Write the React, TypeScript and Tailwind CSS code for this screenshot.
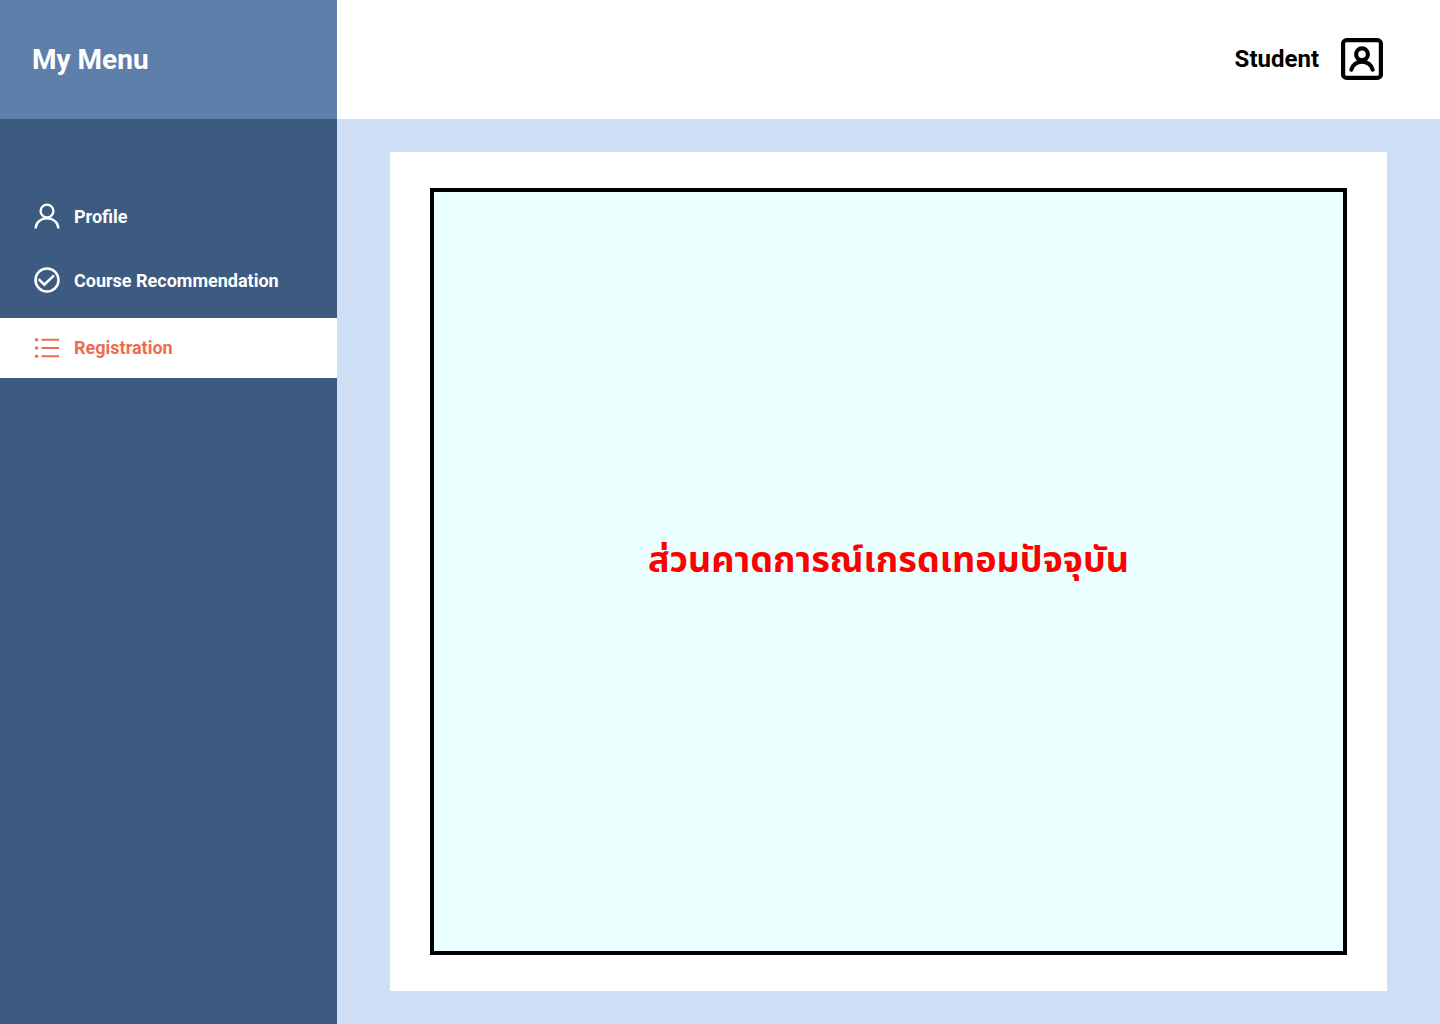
import React from "react";

type IconProps = { className?: string };

function PersonIcon({ className }: IconProps) {
  return (
    <svg viewBox="0 0 28 28" className={className} fill="none" stroke="currentColor" strokeWidth="2.4" strokeLinecap="round" strokeLinejoin="round" aria-hidden="true">
      <circle cx="14" cy="8" r="6.4" />
      <path d="M2.700 24.600A11.350 10.300 0 0 1 25.300 24.600" />
    </svg>
  );
}

function CheckCircleIcon({ className }: IconProps) {
  return (
    <svg viewBox="0 0 28 28" className={className} fill="none" stroke="currentColor" strokeWidth="2.500" aria-hidden="true">
      <circle cx="14" cy="13" r="11.500" />
      <path d="M5.600 12.200L11.300 17.700L21 8.300" />
    </svg>
  );
}

function ListIcon({ className }: IconProps) {
  return (
    <svg viewBox="0 0 28 28" className={className} fill="none" stroke="currentColor" strokeWidth="2" aria-hidden="true">
      <path d="M8.500 5.700H26M8.500 14H26M8.500 22.300H26" />
      <g fill="currentColor" stroke="none">
        <circle cx="3.600" cy="5.700" r="1.700" />
        <circle cx="3.600" cy="14" r="1.700" />
        <circle cx="3.600" cy="22.300" r="1.700" />
      </g>
    </svg>
  );
}

function PortraitIcon({ className }: IconProps) {
  return (
    <svg viewBox="0 0 42 42" className={className} fill="none" stroke="currentColor" strokeWidth="4.200" strokeLinecap="round" aria-hidden="true">
      <rect x="2.100" y="2.100" width="37.800" height="37.800" rx="3.500" />
      <circle cx="21" cy="16.300" r="5.900" />
      <path d="M10.400 31.600A10.800 9.800 0 0 1 31.600 31.600" />
    </svg>
  );
}

const items = [
  { label: "Profile", Icon: PersonIcon, active: false },
  { label: "Course Recommendation", Icon: CheckCircleIcon, active: false },
  { label: "Registration", Icon: ListIcon, active: true },
];

export default function App() {
  return (
    <div className="flex min-h-screen bg-[#cedef4] font-[Roboto,sans-serif]">
      <aside className="flex w-[337px] shrink-0 flex-col bg-[#3d5a80] text-white">
        <div className="flex h-[119px] items-center bg-[#5f7fab] px-8">
          <h2 className="text-[28px] leading-8 font-bold">My Menu</h2>
        </div>
        <nav aria-label="My Menu" className="pt-[66px]">
          <ul>
            {items.map(({ label, Icon, active }) => (
              <li key={label} className={active ? "mt-[5px]" : ""}>
                <a
                  href="#"
                  aria-current={active ? "page" : undefined}
                  className={
                    active
                      ? "flex h-[60px] items-center gap-[13px] bg-white px-[33px] text-[#ee6c4d]"
                      : "flex h-16 items-center gap-[13px] px-[33px]"
                  }
                >
                  <Icon className="size-7 shrink-0" />
                  <span className="text-lg leading-6 font-bold">{label}</span>
                </a>
              </li>
            ))}
          </ul>
        </nav>
      </aside>
      <div className="flex min-w-0 flex-1 flex-col">
        <header className="flex h-[119px] items-center justify-end gap-[22px] bg-white pr-[57px] pb-px">
          <span className="text-2xl font-bold text-black">Student</span>
          <button type="button" aria-label="Student account">
            <PortraitIcon className="size-[42px]" />
          </button>
        </header>
        <main className="flex flex-1 px-[53px] py-[33px]">
          <section className="flex flex-1 bg-white px-10 py-9">
            <div className="flex flex-1 items-center justify-center border-4 border-black bg-[#ebffff]">
              <h1 className="pb-[22px] text-center font-['Noto_Sans_Thai','Noto_Sans',sans-serif] text-4xl font-bold text-[#ff0000]">
                ส่วนคาดการณ์เกรดเทอมปัจจุบัน
              </h1>
            </div>
          </section>
        </main>
      </div>
    </div>
  );
}
